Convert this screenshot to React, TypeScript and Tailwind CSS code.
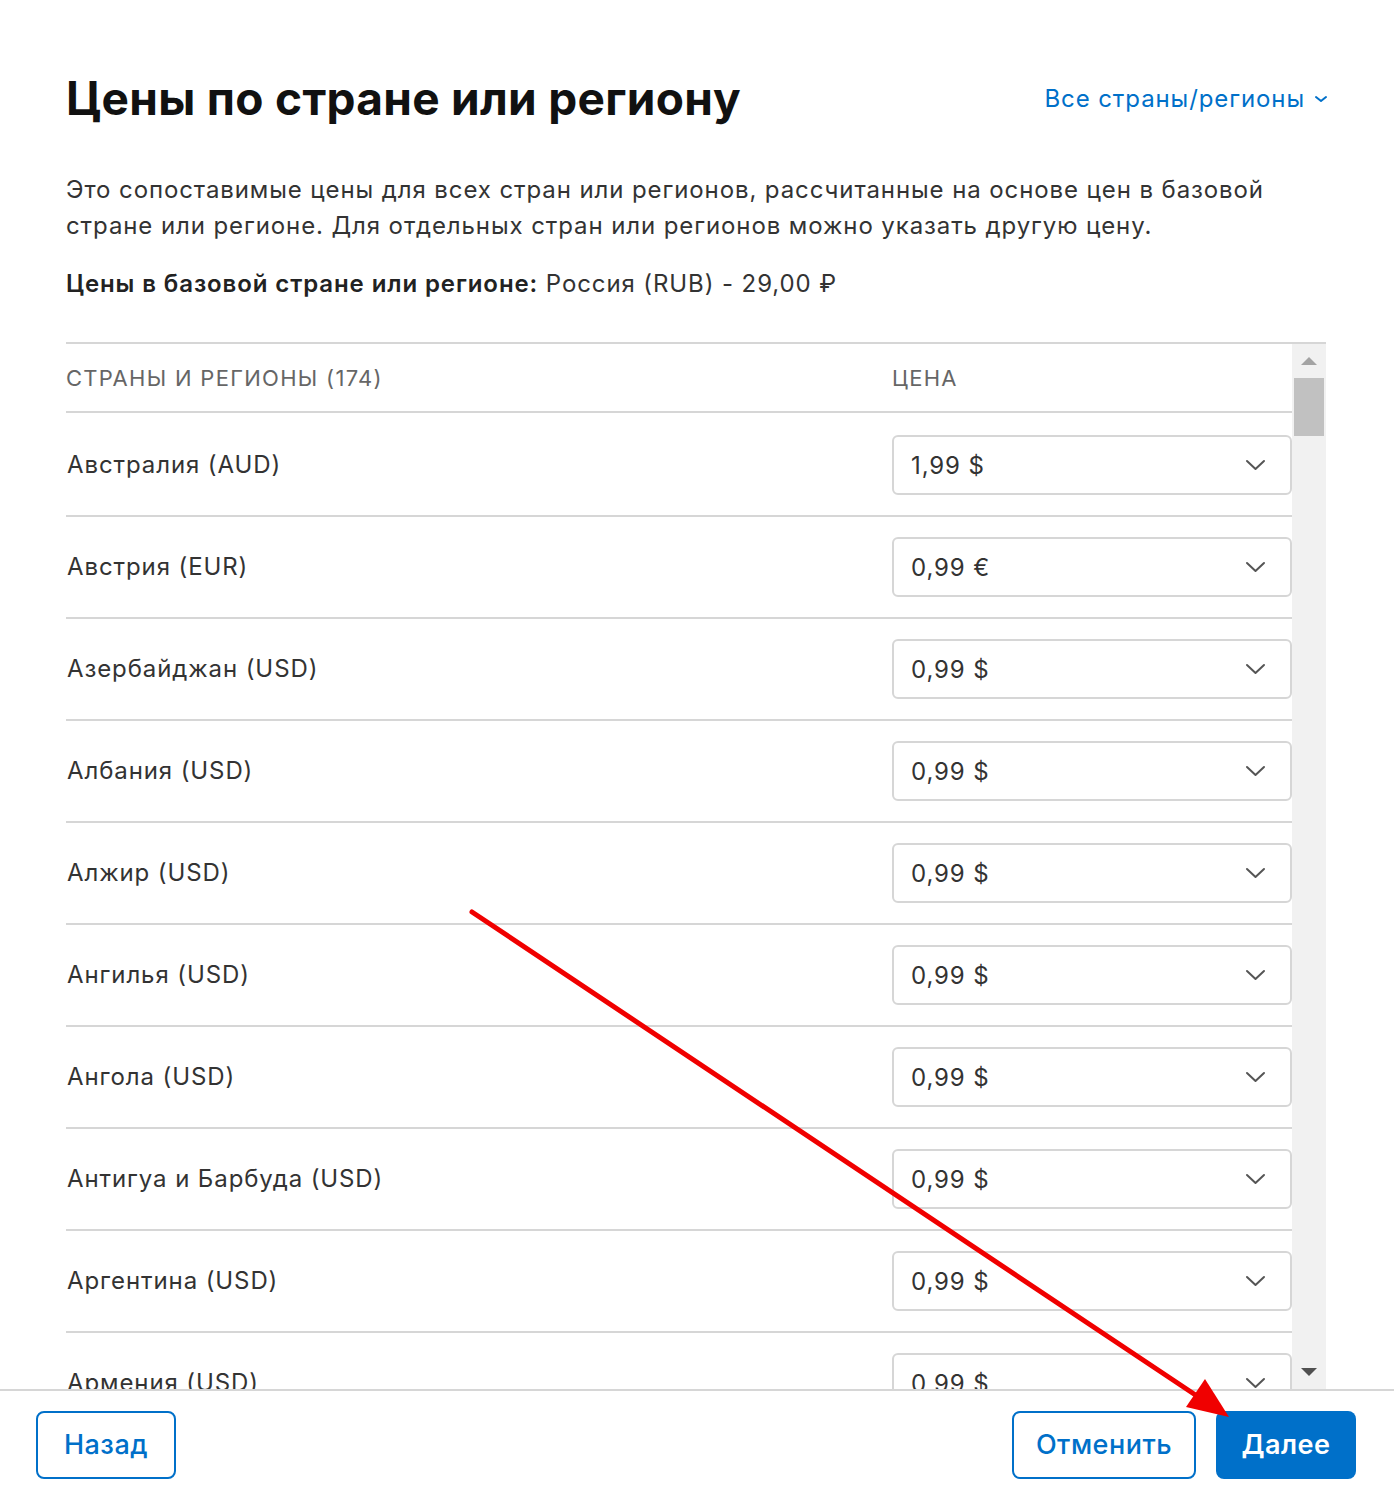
const rows = [
  { name: "Австралия (AUD)", price: "1,99 $" },
  { name: "Австрия (EUR)", price: "0,99 €" },
  { name: "Азербайджан (USD)", price: "0,99 $" },
  { name: "Албания (USD)", price: "0,99 $" },
  { name: "Алжир (USD)", price: "0,99 $" },
  { name: "Ангилья (USD)", price: "0,99 $" },
  { name: "Ангола (USD)", price: "0,99 $" },
  { name: "Антигуа и Барбуда (USD)", price: "0,99 $" },
  { name: "Аргентина (USD)", price: "0,99 $" },
  { name: "Армения (USD)", price: "0,99 $" },
]

function Chevron({ w, h, color, sw }: { w: number; h: number; color: string; sw: number }) {
  return (
    <svg width={w} height={h} viewBox={`0 0 ${w} ${h}`} fill="none">
      <polyline points={`${sw},${sw} ${w / 2},${h - sw} ${w - sw},${sw}`} stroke={color} strokeWidth={sw} strokeLinecap="round" strokeLinejoin="round" />
    </svg>
  )
}

function PriceSelect({ value }: { value: string }) {
  return (
    <div className="w-[400px] h-[60px] rounded-[6px] border-2 border-[#d6d6d6] bg-white flex items-center justify-between pl-[17px] pr-[24px]">
      <span className="text-[24px] text-[#333] tracking-[0.9px] mt-[2px]">{value}</span>
      <Chevron w={21} h={12} color="#555" sw={2} />
    </div>
  )
}

function Scrollbar() {
  return (
    <div className="w-[34px] bg-[#f1f1f1] flex flex-col items-center">
      <div className="h-[34px] flex items-center justify-center">
        <div className="w-0 h-0 border-l-[8px] border-r-[8px] border-b-[8px] border-l-transparent border-r-transparent border-b-[#a3a3a3]" />
      </div>
      <div className="w-[30px] h-[58px] bg-[#c1c1c1]" />
      <div className="flex-1" />
      <div className="h-[34px] flex items-center justify-center">
        <div className="w-0 h-0 border-l-[8px] border-r-[8px] border-t-[8px] border-l-transparent border-r-transparent border-t-[#505050]" />
      </div>
    </div>
  )
}

export default function App() {
  return (
    <div className="relative w-[1394px] h-[1492px] bg-white flex flex-col overflow-hidden" style={{ fontFamily: "Inter, 'Noto Sans', sans-serif" }}>
      <div className="px-[66px] pt-[70px]">
        <div className="flex items-start justify-between">
          <h1 className="text-[46px] font-bold text-[#111] leading-[56px] tracking-[0.3px]">Цены по стране или региону</h1>
          <button className="flex items-center gap-[9px] text-[#0070c9] text-[24px] tracking-[0.9px] mt-[11px]">
            Все страны/регионы
            <Chevron w={14} h={8} color="#0070c9" sw={2} />
          </button>
        </div>
        <p className="mt-[46px] text-[24px] leading-[36px] text-[#333] tracking-[0.9px]">
          Это сопоставимые цены для всех стран или регионов, рассчитанные на основе цен в базовой стране или регионе. Для отдельных стран или регионов можно указать другую цену.
        </p>
        <p className="mt-[22px] text-[24px] leading-[36px] text-[#333] tracking-[0.9px]">
          <span className="font-semibold text-[#222]">Цены в базовой стране или регионе:</span> Россия (RUB) - 29,00 ₽
        </p>
      </div>

      <div className="ml-[66px] mr-[68px] mt-[40px] flex-1 flex border-t-2 border-[#d6d6d6] overflow-hidden">
        <div className="flex-1 overflow-hidden">
          <div className="h-[69px] flex items-center border-b-2 border-[#d6d6d6] text-[22px] text-[#666] tracking-[1.3px] pt-[2px]">
            <div className="w-[826px]">СТРАНЫ И РЕГИОНЫ (174)</div>
            <div>ЦЕНА</div>
          </div>
          <div className="pt-[2px]">
            {rows.map(r => (
              <div key={r.name} className="h-[102px] flex items-center border-b-2 border-[#d6d6d6]">
                <div className="w-[826px] text-[24px] text-[#333] tracking-[0.9px] pl-[1px]">{r.name}</div>
                <PriceSelect value={r.price} />
              </div>
            ))}
          </div>
        </div>
        <Scrollbar />
      </div>

      <div className="h-[103px] border-t-2 border-[#d6d6d6] flex items-start justify-between px-[36px] pt-[20px] bg-white">
        <button className="h-[68px] w-[140px] rounded-[8px] border-2 border-[#0070c9] text-[#0070c9] text-[27px] font-medium tracking-[0.5px]">Назад</button>
        <div className="flex gap-[20px] mr-[2px]">
          <button className="h-[68px] w-[184px] rounded-[8px] border-2 border-[#0070c9] text-[#0070c9] text-[27px] font-medium tracking-[0.5px]">Отменить</button>
          <button className="h-[68px] w-[140px] rounded-[8px] bg-[#0070c9] text-white text-[27px] font-semibold tracking-[0.5px]">Далее</button>
        </div>
      </div>

      <svg className="absolute left-0 top-0 pointer-events-none" width="1394" height="1492">
        <line x1="472" y1="912" x2="1200" y2="1398" stroke="#f00000" strokeWidth="5" strokeLinecap="round" />
        <polygon points="1229,1417 1186,1407 1205,1379" fill="#f00000" />
      </svg>
    </div>
  )
}
